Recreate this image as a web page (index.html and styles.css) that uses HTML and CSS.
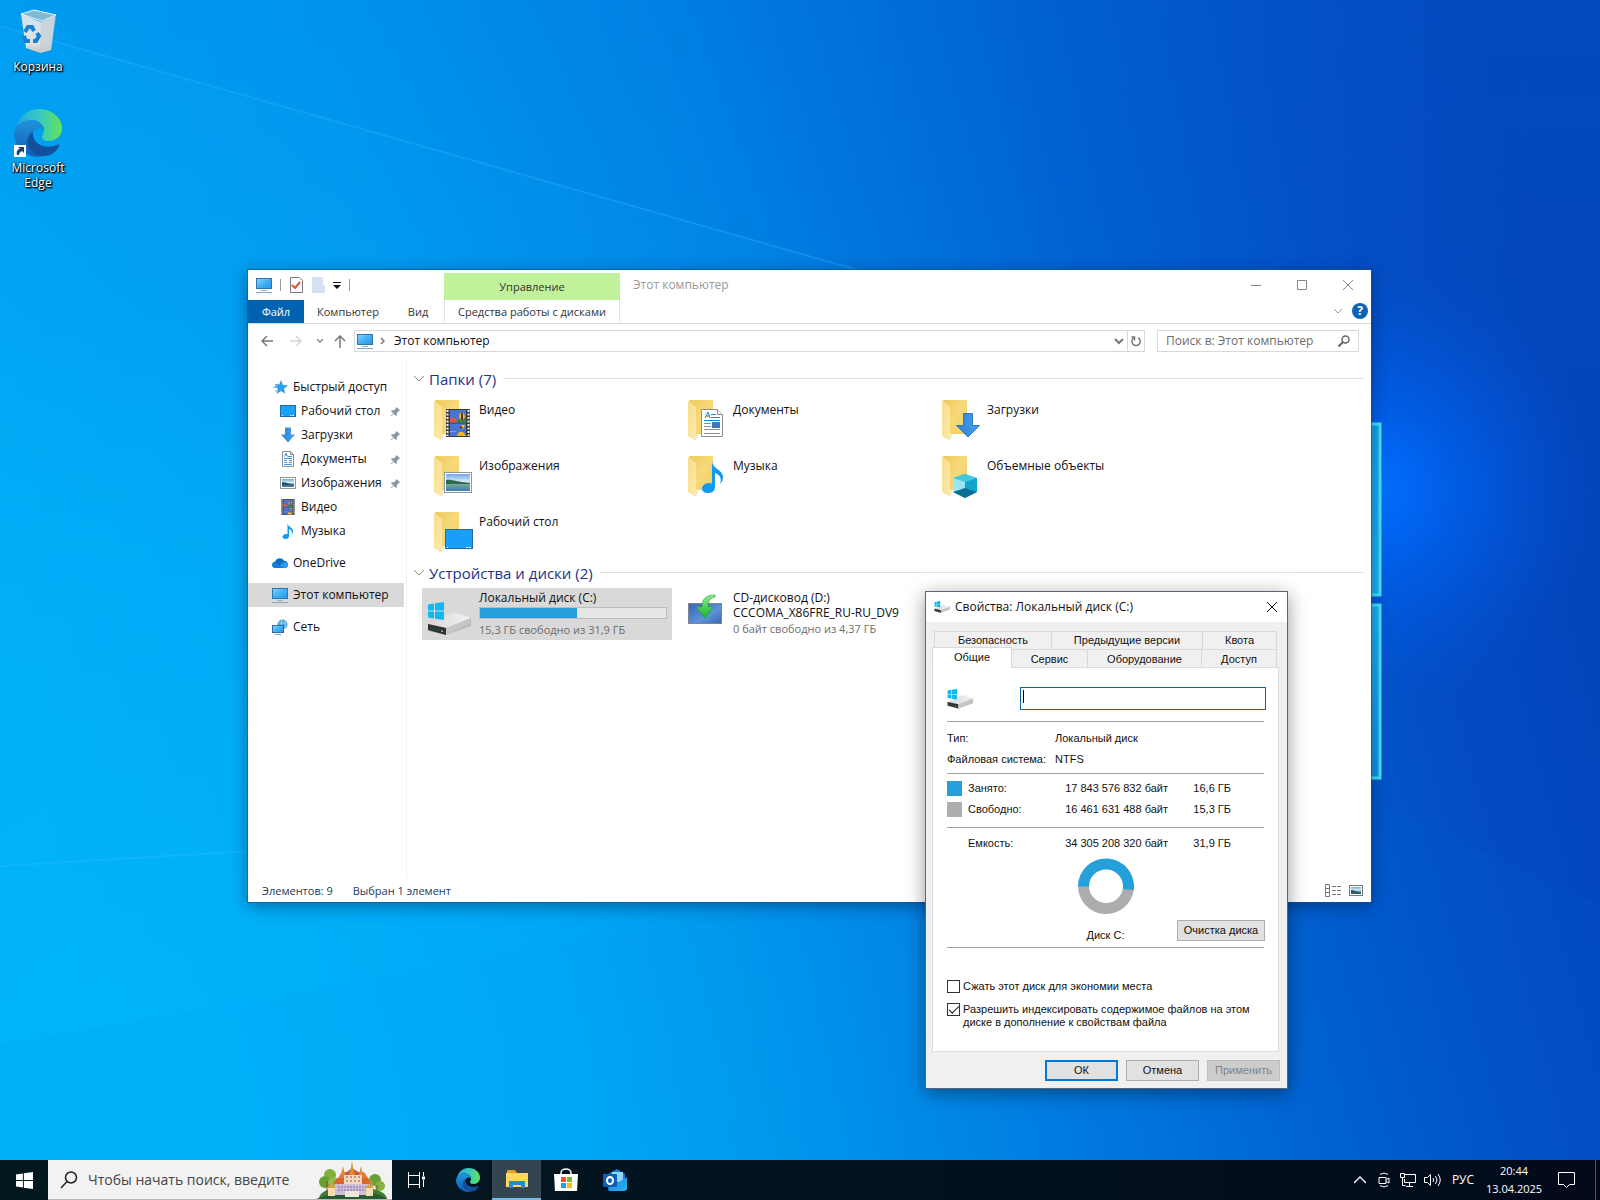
FILE: index.html
```html
<!DOCTYPE html>
<html lang="ru">
<head>
<meta charset="utf-8">
<title>Рабочий стол</title>
<link rel="stylesheet" href="styles.css">
</head>
<body>
<svg class="sprite" aria-hidden="true">
  <defs>
    <linearGradient id="gScreen" x1="0" y1="0" x2="1" y2="1"><stop offset="0" stop-color="#8fd3fb"/><stop offset=".5" stop-color="#41b1f5"/><stop offset="1" stop-color="#2b95e4"/></linearGradient>
    <linearGradient id="gFolder" x1="0" y1="0" x2="1" y2="1"><stop offset="0" stop-color="#eecb62"/><stop offset=".5" stop-color="#f8d978"/><stop offset="1" stop-color="#f1cc66"/></linearGradient>
    <linearGradient id="gFlap" x1="0" y1="0" x2="1" y2="1"><stop offset="0" stop-color="#f7dd8a"/><stop offset="1" stop-color="#fde9ac"/></linearGradient>
    <linearGradient id="gArrow" x1="0" y1="0" x2="1" y2="0"><stop offset="0" stop-color="#2a7fd4"/><stop offset="1" stop-color="#4aa3ee"/></linearGradient>
    <linearGradient id="gSky" x1="0" y1="0" x2="0" y2="1"><stop offset="0" stop-color="#6ea6e8"/><stop offset=".45" stop-color="#dcecf7"/><stop offset=".6" stop-color="#7aa79a"/><stop offset="1" stop-color="#3b7db0"/></linearGradient>
    <linearGradient id="gDrive" x1="0" y1="0" x2="1" y2="0"><stop offset="0" stop-color="#d8d8da"/><stop offset="1" stop-color="#f2f2f4"/></linearGradient>
    <linearGradient id="gCd" x1="0" y1="0" x2="1" y2="1"><stop offset="0" stop-color="#3563b4"/><stop offset=".6" stop-color="#5d93d6"/><stop offset="1" stop-color="#3866b0"/></linearGradient>
    <linearGradient id="gGreen" x1="0" y1="0" x2="0" y2="1"><stop offset="0" stop-color="#8af08a"/><stop offset="1" stop-color="#16b52c"/></linearGradient>
    <linearGradient id="gEdgeA" x1="0" y1="0" x2="1" y2="0"><stop offset="0" stop-color="#24a6e4"/><stop offset=".5" stop-color="#37c8c4"/><stop offset="1" stop-color="#62e455"/></linearGradient>
    <linearGradient id="gEdgeB" x1="0" y1="0" x2="0" y2="1"><stop offset="0" stop-color="#2193dc"/><stop offset="1" stop-color="#0f5cb5"/></linearGradient>
    <linearGradient id="gBin" x1="0" y1="0" x2="0" y2="1"><stop offset="0" stop-color="#cfe3ef"/><stop offset=".75" stop-color="#dfe3e7"/><stop offset="1" stop-color="#cdbfb8"/></linearGradient>
    <linearGradient id="gOut" x1="0" y1="0" x2="1" y2="1"><stop offset="0" stop-color="#1b86dd"/><stop offset="1" stop-color="#28b4f0"/></linearGradient>
    <linearGradient id="gWall" x1="0" y1=".6" x2="1" y2=".4"><stop offset="0" stop-color="#00aef8"/><stop offset=".3" stop-color="#009ff2"/><stop offset=".5" stop-color="#0087e6"/><stop offset=".72" stop-color="#0062d2"/><stop offset=".87" stop-color="#034cc4"/><stop offset="1" stop-color="#0442b8"/></linearGradient>
    <linearGradient id="gTopDark" x1="0" y1="0" x2="0" y2="1"><stop offset="0" stop-color="#006ad8" stop-opacity=".2"/><stop offset="1" stop-color="#006ad8" stop-opacity="0"/></linearGradient>
    <radialGradient id="gGlow" cx="1375" cy="490" r="220" gradientUnits="userSpaceOnUse"><stop offset="0" stop-color="#0070ff"/><stop offset=".3" stop-color="#0068fa" stop-opacity=".7"/><stop offset="1" stop-color="#0058e0" stop-opacity="0"/></radialGradient>
    <radialGradient id="gLow" cx="150" cy="1100" r="800" gradientUnits="userSpaceOnUse"><stop offset="0" stop-color="#00b8fc" stop-opacity=".7"/><stop offset="1" stop-color="#00b8fc" stop-opacity="0"/></radialGradient>
    <linearGradient id="gPane" x1="0" y1="0" x2="0" y2="1"><stop offset="0" stop-color="#16a4ea"/><stop offset=".5" stop-color="#1fb2f2"/><stop offset="1" stop-color="#1590e4"/></linearGradient>
  </defs>

  <symbol id="pc" viewBox="0 0 16 16"><rect x=".5" y="1.5" width="15" height="10" fill="url(#gScreen)" stroke="#2a78ac"/><path d="M5 13.5h6" stroke="#8fb3ca"/><path d="M0 15.5h16" stroke="#86a6c4"/></symbol>
  <symbol id="star" viewBox="0 0 16 16"><path d="M9 1l2 5 5 .3-4 3.4 1.300 5L9 12l-4.500 3 1.300-5L2.500 6.500 7 6z" fill="#2f9fe8"/><path d="M3 5.500h4M1 8.500h5M3 12h3" stroke="#5cb6ee"/></symbol>
  <symbol id="desk" viewBox="0 0 16 16"><rect x=".5" y="2.500" width="15" height="11" fill="#18a2f8" stroke="#1b6fae"/><path d="M2 12.500h1M10 12.500h1M12 12.500h2" stroke="#e6f6ff"/></symbol>
  <symbol id="down" viewBox="0 0 16 16"><path d="M5 .5h6v7h4L8 15.500 1 7.500h4z" fill="url(#gArrow)"/></symbol>
  <symbol id="docs" viewBox="0 0 16 16"><path d="M2.500.5h8l3 3v12h-11z" fill="#fff" stroke="#8b8f93"/><path d="M10.500.5v3h3" fill="none" stroke="#8b8f93"/><path d="M4.500 5.500l1.500-3 1.500 3" fill="none" stroke="#1e82cc"/><path d="M8 5.500h4M4 7.500h8M4 9.500h3M9 9.500h3M4 11.500h3M9 11.500h3M4 13.500h8" stroke="#3f97d6"/></symbol>
  <symbol id="pics" viewBox="0 0 16 16"><rect x=".5" y="2.500" width="15" height="11" fill="#fff" stroke="#8f979e"/><rect x="2" y="4" width="12" height="8" fill="url(#gSky)"/><path d="M2 7.500c3-1 5 1.500 12 2v1H2z" fill="#27515c"/></symbol>
  <symbol id="video" viewBox="0 0 24 28"><rect width="24" height="28" fill="#3c3c3f"/><path d="M1.500 1v26M22.500 1v26" stroke="#f4f4f4" stroke-width="2" stroke-dasharray="2 1.500"/><rect x="4" y="1" width="16" height="12.500" fill="#4a73d6"/><rect x="4" y="14.500" width="16" height="12.500" fill="#4a73d6"/><path d="M4 9c3-2 5 0 7 2v2.500H4z" fill="#d45b52"/><path d="M11 13.500h9V9c-3 0-5 2-9 2z" fill="#2d8a41"/><path d="M14 4h4l1 4-2 3h-2l-2-3z" fill="#f1c21b"/><path d="M16 4v7M14 18h4" stroke="#6b2a10" stroke-width="2"/><path d="M15 16h4l-2 4z" fill="#f1c21b"/><path d="M11 27l2-4h4l3 4z" fill="#f1b51b"/><path d="M4 22h6v1H4z" fill="#7fa0ea"/></symbol>
  <symbol id="music" viewBox="0 0 22 32"><path d="M10 0c0 8 12 9 11 17-.3 3-1.500 4.500-3 6 2-6 0-9-5-11v14c0 4-3 6-7 6s-6-2-6-4.500S3 22 7 22c1.500 0 2.500.3 3 .7z" fill="#109af2"/></symbol>
  <symbol id="cloud" viewBox="0 0 16 12"><path d="M3.500 11A3.300 3.300 0 013 4.500 5 5 0 0112 3.700 3.700 3.700 0 0113 11z" fill="#0f6cc4"/><path d="M4 11l7-5.500c3-1.500 5 .5 5 2.500 0 1.800-1.300 3-3 3z" fill="#2a9be8"/><path d="M0 8a3 3 0 013.500-3L12 10.900H3.500C1.500 11 0 9.800 0 8z" fill="#1480d6"/></symbol>
  <symbol id="net" viewBox="0 0 16 16"><circle cx="10.500" cy="5.500" r="5" fill="#4ba3d4"/><path d="M7 3.500c2 1 5 1 7-.5M10 1c-1 3-1 6 0 9M13 2c1 2 1 5 0 7" fill="none" stroke="#a8d8f0"/><rect x=".5" y="6.500" width="11" height="7" fill="url(#gScreen)" stroke="#2a6f9e"/><path d="M3 15.500h6" stroke="#7fa5bf"/></symbol>
  <symbol id="pin" viewBox="0 0 12 12"><path d="M7 1l4 4-1.500.5-2 2 0 2.500L6.500 11 4 8.500 1 11.500.5 11l3-3L1 5.500 2 4.500h2.500l2-2z" fill="#8d969f"/></symbol>
  <symbol id="folder" viewBox="0 0 40 44"><path d="M1 0h24v34H6z" fill="url(#gFolder)"/><path d="M0 1l8 6v34l-8-5z" fill="url(#gFlap)"/><path d="M8 34l2 2-2 5z" fill="#efe6cc"/></symbol>
  <symbol id="winlogo" viewBox="0 0 16 16"><path d="M0 2.300l6.500-.9v6.200H0zM7.400 1.200L16 0v7.600H7.400zM0 8.400h6.500v6.200L0 13.700zM7.400 8.400H16V16l-8.600-1.200z"/></symbol>
  <symbol id="drive" viewBox="0 0 44 34"><path d="M1 23l23-11 20 4v8L19 33 1 29z" fill="#b9b9bc"/><path d="M1 22l23-11q2-.6 4 0l14 4q3 1 0 2.500L20 26z" fill="url(#gDrive)"/><path d="M1 22l18 4v7L1 28z" fill="#303234"/><path d="M19 26l24-10v6L19 33z" fill="#c6c6c9"/><path d="M3 25l9 2v2l-9-2z" fill="#1d4a3c"/><path d="M14 29l2 .4" stroke="#d8e6d8"/><g fill="#10b8f0"><path d="M1 2.500l6-1v7H1zM8 1.300L17 0v8.500H8zM1 9.500h6v7l-6-1zM8 9.500h9V18l-9-1.300z"/></g></symbol>
  <symbol id="cd" viewBox="0 0 34 32"><rect x=".5" y="9.500" width="33" height="20" fill="url(#gCd)" stroke="#7d8590"/><path d="M27 1c-8 0-13 3-13 12H8l9 11 8-11h-5c0-6 2-9 7-10z" fill="url(#gGreen)" stroke="#1f9a3a" stroke-width=".6"/></symbol>
  <symbol id="edge" viewBox="0 0 48 48"><path d="M2 22C3 9 13 0 25 0c14 0 23 10 23 19 0 8-6 13-13 13-5 0-7-2-7-4s2-3 2-7c0-5-5-10-13-10C9 11 4 15 2 22z" fill="url(#gEdgeA)"/><path d="M0 24C1 16 8 11 17 11c7 0 12 4 13 9-3-2-7-1-9 1-8 7-2 22 10 26C14 51 0 39 0 24z" fill="url(#gEdgeB)"/><path d="M18 23c-10 9-4 23 13 24 6 0 11-4 14-10 1-2-1-2-2-1-9 4-22 1-24-9 0-2 0-3-1-4z" fill="#12509e"/></symbol>
</svg>

<main class="desktop">
  <svg class="wallpaper" viewBox="0 0 1600 1200" preserveAspectRatio="none" aria-hidden="true">
    <rect width="1600" height="1200" fill="url(#gWall)"/>
    <rect width="1600" height="620" fill="url(#gTopDark)"/>
    <rect width="1600" height="1200" fill="url(#gLow)"/>
    <path d="M0 26L1371 416V800L0 866z" fill="#14b2ff" opacity=".07"/>
    <path d="M0 1045L1371 800 1600 905V1200H0z" fill="#0090ee" opacity=".05"/>
    <path d="M0 26L900 282" stroke="#38b8ff" stroke-width="2" opacity=".3"/>
    <path d="M0 866L300 848" stroke="#4cc8ff" stroke-width="2" opacity=".2"/>
    <rect width="1600" height="1200" fill="url(#gGlow)"/>
    <path d="M1300 424l80 0v171h-80zM1300 605h80v173h-80z" fill="url(#gPane)" stroke="#3fe4fa" stroke-width="3"/>
  </svg>

  <nav class="shortcuts">
    <a href="#" class="shortcut">
      <svg width="48" height="48" viewBox="0 0 48 48"><path d="M7 6l5 34 14 5 11-3 4-34-14 6z" fill="url(#gBin)"/><path d="M7 6l13-4 22 5-14 6z" fill="#7fb9d4" stroke="#eef6fa"/><path d="M27 13l-1 32 11-3 5-34z" fill="#c3cdd4" opacity=".7"/><g fill="none" stroke="#1c80d0" stroke-width="4"><path d="M11 24l3-5 4 0 2 4M10 28l2 5 4 0M19 33h3l3-5-2-3"/></g></svg>
      <span>Корзина</span>
    </a>
    <a href="#" class="shortcut">
      <svg width="48" height="48" viewBox="0 0 48 48"><use href="#edge"/><rect x="0" y="36" width="12" height="12" fill="#fff"/><path d="M3 46c-1-4 1-6 3-6L4 38h6v6L8 42c-2 1-3 2-3 4z" fill="#1c3f7c"/></svg>
      <span>Microsoft Edge</span>
    </a>
  </nav>

  <section class="explorer" aria-label="Этот компьютер">
    <header class="ribbon">
      <div class="quick">
        <svg width="16" height="16"><use href="#pc"/></svg>
        <i class="bar"></i>
        <svg width="14" height="18" viewBox="0 0 14 18"><path d="M1.500 1.500h9l3 3v12h-12z" fill="#fff" stroke="#7a7a7a"/><path d="M3 9l3 3 5-6" fill="none" stroke="#e0532f" stroke-width="2"/></svg>
        <svg width="14" height="18" viewBox="0 0 14 18"><path d="M1 1h11v8h2v8H1z" fill="#d5e1f1"/></svg>
        <svg width="8" height="8" viewBox="0 0 8 8"><path d="M0 1.500h8" stroke="#111"/><path d="M0 4h8L4 8z" fill="#111"/></svg>
        <i class="bar"></i>
      </div>
      <div class="tabs">
        <button class="file">Файл</button>
        <button class="tab-pc">Компьютер</button>
        <button class="tab-view">Вид</button>
      </div>
      <div class="manage">
        <div class="manage-title">Управление</div>
        <button>Средства работы с дисками</button>
      </div>
      <h1>Этот компьютер</h1>
      <div class="caption">
        <div class="caption-row">
          <button aria-label="Свернуть"><svg width="10" height="10"><path d="M0 5.500h10" stroke="#888"/></svg></button>
          <button aria-label="Развернуть"><svg width="10" height="10"><path d="M.5.5h9v9h-9z" fill="none" stroke="#888"/></svg></button>
          <button aria-label="Закрыть"><svg width="10" height="10"><path d="M0 0l10 10M10 0L0 10" stroke="#888"/></svg></button>
        </div>
        <div class="help-row">
          <svg width="8" height="6"><path d="M0 1l4 4 4-4" fill="none" stroke="#9a9a9a"/></svg>
          <button class="help" aria-label="Справка">?</button>
        </div>
      </div>
    </header>

    <div class="address-row">
      <div class="nav-buttons">
        <button aria-label="Назад"><svg width="12" height="12"><path d="M12 6H1M6 1L1 6l5 5" fill="none" stroke="#777" stroke-width="1.500"/></svg></button>
        <button aria-label="Вперед"><svg width="12" height="12"><path d="M0 6h11M6 1l5 5-5 5" fill="none" stroke="#d6d6d6" stroke-width="1.500"/></svg></button>
        <button class="recent" aria-label="Последние"><svg width="6" height="6"><path d="M0 1l3 3 3-3" fill="none" stroke="#888" stroke-width="1.500"/></svg></button>
        <button aria-label="Вверх"><svg width="12" height="13"><path d="M6 13V1M1 6l5-5 5 5" fill="none" stroke="#777" stroke-width="1.500"/></svg></button>
      </div>
      <div class="address">
        <svg width="16" height="16"><use href="#pc"/></svg>
        <svg width="5" height="8"><path d="M1 1l3 3-3 3" fill="none" stroke="#777" stroke-width="1.500"/></svg>
        <span>Этот компьютер</span>
        <button aria-label="Предыдущие расположения"><svg width="10" height="7"><path d="M1 1l4 4 4-4" fill="none" stroke="#777" stroke-width="2"/></svg></button>
        <button class="refresh" aria-label="Обновить"><svg width="12" height="12"><path d="M8 2.600A4.200 4.200 0 113.500 3M1.500 2H4.500V5.500" fill="none" stroke="#777" stroke-width="1.500"/></svg></button>
      </div>
      <label class="search">
        <input type="text" placeholder="Поиск в: Этот компьютер" aria-label="Поиск">
        <svg width="12" height="12"><circle cx="7.500" cy="4.500" r="3.500" fill="none" stroke="#666" stroke-width="1.500"/><path d="M5 7l-4.500 4.500" stroke="#666" stroke-width="2"/></svg>
      </label>
    </div>

    <div class="body">
      <nav class="tree">
        <a href="#"><svg width="16" height="16"><use href="#star"/></svg>Быстрый доступ</a>
        <a href="#" class="sub"><svg width="16" height="16"><use href="#desk"/></svg>Рабочий стол<svg class="pin" width="11" height="11"><use href="#pin"/></svg></a>
        <a href="#" class="sub"><svg width="16" height="16"><use href="#down"/></svg>Загрузки<svg class="pin" width="11" height="11"><use href="#pin"/></svg></a>
        <a href="#" class="sub"><svg width="16" height="16"><use href="#docs"/></svg>Документы<svg class="pin" width="11" height="11"><use href="#pin"/></svg></a>
        <a href="#" class="sub"><svg width="16" height="16"><use href="#pics"/></svg>Изображения<svg class="pin" width="11" height="11"><use href="#pin"/></svg></a>
        <a href="#" class="sub"><svg width="16" height="16"><use href="#video"/></svg>Видео</a>
        <a href="#" class="sub"><svg width="16" height="16"><use href="#music"/></svg>Музыка</a>
        <a href="#" class="root"><svg width="16" height="12"><use href="#cloud"/></svg>OneDrive</a>
        <a href="#" class="root selected"><svg width="16" height="16"><use href="#pc"/></svg>Этот компьютер</a>
        <a href="#" class="root"><svg width="16" height="16"><use href="#net"/></svg>Сеть</a>
      </nav>
      <div class="content">
        <h2><svg width="12" height="8"><path d="M1 1l5 5 5-5" fill="none" stroke="#8a8a8a"/></svg>Папки (7)</h2>
        <div class="grid">
          <a href="#" class="tile"><svg width="40" height="44"><use href="#folder"/><use href="#video" x="12" y="9" width="24" height="28"/></svg><span>Видео</span></a>
          <a href="#" class="tile"><svg width="40" height="44" viewBox="0 0 40 44"><use href="#folder"/><path d="M13.500 9.500h16l5 5v22h-21z" fill="#fff" stroke="#8a8f94"/><path d="M29.500 9.500v5h5" fill="#f2f2f2" stroke="#8a8f94"/><path d="M17 18l3-6 2 6M18 16h4" fill="none" stroke="#1e82cc"/><path d="M23 14.500h5M23 17.500h9M16 20.500h16" stroke="#1e82cc"/><path d="M16 23.500h7M16 26.500h7M16 29.500h16M16 33.500h16" stroke="#8a8f94"/><rect x="24" y="22" width="8" height="6" fill="#3f78b5"/></svg><span>Документы</span></a>
          <a href="#" class="tile"><svg width="40" height="44" viewBox="0 0 40 44"><use href="#folder"/><path d="M21.500 13.500h9v12h7L26 37 14.500 25.500h7z" fill="url(#gArrow)" stroke="#2c78c4"/></svg><span>Загрузки</span></a>
          <a href="#" class="tile"><svg width="40" height="44" viewBox="0 0 40 44"><use href="#folder"/><rect x="10.500" y="16.500" width="27" height="20" fill="#fff" stroke="#8f979e"/><rect x="12" y="18" width="24" height="17" fill="url(#gSky)"/><path d="M12 24c6-1 10 2 24 3v1H12z" fill="#2e6b4e"/></svg><span>Изображения</span></a>
          <a href="#" class="tile"><svg width="40" height="44"><use href="#folder"/><use href="#music" x="14" y="5" width="22" height="32"/></svg><span>Музыка</span></a>
          <a href="#" class="tile"><svg width="40" height="44" viewBox="0 0 40 44"><use href="#folder"/><path d="M11 22l12-4 12 4v14l-12 6-12-6z" fill="#2fc0dc"/><path d="M11 22l12-4 12 4-12 4z" fill="#48c6de"/><path d="M11 22l12 4v9l-12 1z" fill="#98e8f4"/><path d="M23 26l12-4v14l-12-1z" fill="#12a4cc"/><path d="M11 36l12-4 12 4-12 6z" fill="#0a6f92"/></svg><span>Объемные объекты</span></a>
          <a href="#" class="tile"><svg width="40" height="44" viewBox="0 0 40 44"><use href="#folder"/><rect x="11.500" y="17.500" width="27" height="19" fill="#18a0f8" stroke="#2a6a9a"/><path d="M13 35.500h1M32 35.500h2M35 35.500h2" stroke="#fff"/></svg><span>Рабочий стол</span></a>
        </div>
        <h2><svg width="12" height="8"><path d="M1 1l5 5 5-5" fill="none" stroke="#8a8a8a"/></svg>Устройства и диски (2)</h2>
        <div class="grid">
          <a href="#" class="tile drive selected"><svg width="44" height="34"><use href="#drive"/></svg><span class="info"><b>Локальный диск (C:)</b><i class="meter"><i style="width:52%"></i></i><small>15,3 ГБ свободно из 31,9 ГБ</small></span></a>
          <a href="#" class="tile drive"><svg class="cd" width="34" height="32"><use href="#cd"/></svg><span class="info"><b>CD-дисковод (D:)</b><b>CCCOMA_X86FRE_RU-RU_DV9</b><small>0 байт свободно из 4,37 ГБ</small></span></a>
        </div>
      </div>
    </div>

    <footer class="status">
      <span>Элементов: 9</span><span>Выбран 1 элемент</span>
      <svg class="views" width="16" height="13"><path d="M.5.5h4v12h-4zM.5 4.500h4M.5 8.500h4" fill="none" stroke="#777"/><path d="M7 2.500h4M12 2.500h4M7 6.500h4M12 6.500h4M7 10.500h4M12 10.500h4" stroke="#777"/></svg>
      <svg width="14" height="11"><rect x=".5" y=".5" width="13" height="10" fill="#fff" stroke="#777"/><rect x="2" y="2" width="10" height="7" fill="url(#gSky)"/><path d="M2 5c3 0 5 2 10 2v2H2z" fill="#2b5a72"/></svg>
    </footer>
  </section>

  <section class="dialog" role="dialog" aria-label="Свойства: Локальный диск (C:)">
    <header class="dialog-title">
      <svg width="16" height="12"><use href="#drive"/></svg>
      <h1>Свойства: Локальный диск (C:)</h1>
      <button aria-label="Закрыть"><svg width="12" height="12"><path d="M1 1l10 10M11 1L1 11" stroke="#111"/></svg></button>
    </header>
    <div class="tabrow top" role="tablist"><button>Безопасность</button><button>Предыдущие версии</button><button>Квота</button></div>
    <div class="tabrow" role="tablist"><button class="active">Общие</button><button>Сервис</button><button>Оборудование</button><button>Доступ</button></div>
    <div class="panel">
      <div class="name-row">
        <svg width="26" height="22"><use href="#drive"/></svg>
        <div class="field"><input type="text" aria-label="Метка тома"><i class="caret"></i></div>
      </div>
      <dl>
        <dt>Тип:</dt><dd>Локальный диск</dd>
        <dt>Файловая система:</dt><dd>NTFS</dd>
      </dl>
      <table>
        <tbody>
          <tr><td class="key"><i class="swatch used"></i></td><th scope="row">Занято:</th><td>17 843 576 832 байт</td><td>16,6 ГБ</td></tr>
          <tr><td class="key"><i class="swatch free"></i></td><th scope="row">Свободно:</th><td>16 461 631 488 байт</td><td>15,3 ГБ</td></tr>
        </tbody>
      </table>
      <table class="total">
        <tbody>
          <tr><td class="key"></td><th scope="row">Емкость:</th><td>34 305 208 320 байт</td><td>31,9 ГБ</td></tr>
        </tbody>
      </table>
      <div class="chart-row">
        <figure>
          <svg width="56" height="56" viewBox="0 0 56 56" fill="none" stroke-width="11"><path d="M5.500 28a22.500 22.500 0 0044.800 3" stroke="#adadad"/><path d="M5.500 28.500a22.500 22.500 0 1144.800 3" stroke="#26a0da"/></svg>
          <figcaption>Диск C:</figcaption>
        </figure>
        <button class="btn">Очистка диска</button>
      </div>
      <label class="check"><input type="checkbox">Сжать этот диск для экономии места</label>
      <label class="check"><input type="checkbox" checked>Разрешить индексировать содержимое файлов на этом<br>диске в дополнение к свойствам файла</label>
    </div>
    <footer class="actions">
      <button class="btn default">ОК</button>
      <button class="btn">Отмена</button>
      <button class="btn" disabled>Применить</button>
    </footer>
  </section>
</main>

<footer class="taskbar">
  <button class="start" aria-label="Пуск"><svg width="17" height="17" fill="#fff"><use href="#winlogo"/></svg></button>
  <label class="task-search">
    <svg width="18" height="18"><circle cx="11" cy="6.500" r="5.500" fill="none" stroke="#222" stroke-width="1.500"/><path d="M7 10.500L1 17" stroke="#222" stroke-width="1.500"/></svg>
    <input type="text" placeholder="Чтобы начать поиск, введите" aria-label="Поиск в Windows">
    <svg class="castle" width="72" height="38" viewBox="0 0 72 38">
      <path d="M3 38c0-8 12-12 33-12s34 4 35 12z" fill="#3f7d38"/><path d="M0 38q20-8 40-6 20-2 31 6z" fill="#275b33"/>
      <circle cx="14" cy="14" r="6" fill="#7fae3a"/><circle cx="9" cy="21" r="6" fill="#6a9e37"/><circle cx="17" cy="21" r="5" fill="#92bb48"/><circle cx="59" cy="19" r="6" fill="#6a9e37"/><circle cx="64" cy="25" r="5" fill="#86b33f"/><circle cx="53" cy="23" r="4" fill="#8db544"/>
      <path d="M11 20v14M61 24v10" stroke="#7b5026"/>
      <rect x="19" y="22" width="34" height="12" fill="#cdbfd8"/><path d="M17 23l4-6h31l4 6z" fill="#d8652e"/><path d="M22 17l4-6h22l4 6z" fill="#e27b35"/>
      <rect x="28" y="13" width="18" height="10" fill="#f0d9c0"/><path d="M27 14l9-7 11 7z" fill="#cf5a32"/><path d="M36 0l1 7 2 7h-6l2-7z" fill="#d78c35"/><path d="M27 5l2 9h-4zM45 5l2 9h-4z" fill="#e08a3c"/>
      <path d="M22 26h29M22 29h29" stroke="#8668a6" stroke-dasharray="2 1"/><path d="M30 16h15M30 20h15" stroke="#a54b3a" stroke-dasharray="2 2"/>
      <rect x="12" y="26" width="7" height="9" fill="#f1dfb0"/><path d="M11 27l4-5 5 5z" fill="#e59a4a"/><rect x="50" y="26" width="7" height="9" fill="#f1dfb0"/><path d="M49 27l5-5 4 5z" fill="#e59a4a"/><rect x="29" y="30" width="14" height="6" fill="#efe6dc"/>
    </svg>
  </label>
  <button class="task-view" aria-label="Представление задач"><svg width="18" height="18" fill="none" stroke="#fff"><path d="M1.500 1v3M12.500 1v3M1 4.500h12M1.500 5v8M12.500 5v8M1 13.500h12M1.500 13v4M12.500 13v4M16.500 1v4M16.500 9v7"/><path d="M15 7h3" stroke-width="3"/></svg></button>
  <button aria-label="Microsoft Edge"><svg width="24" height="24"><use href="#edge"/></svg></button>
  <button class="running" aria-label="Проводник"><svg width="22" height="20" viewBox="0 0 22 20"><path d="M1 1h8l2 3h10v14H1z" fill="#e8a020"/><path d="M0 4h22v14H0z" fill="#fdd667"/><path d="M3 19v-7h16v7h-4v-3H7v3z" fill="#2b88c8"/></svg></button>
  <button aria-label="Microsoft Store"><svg width="24" height="24"><path d="M7 8V5a5 4 0 0110 0v3" fill="none" stroke="#fff" stroke-width="1.500"/><path d="M0 6h24l-1 17H1z" fill="#fff"/><path d="M7 9h5v5H7z" fill="#f0502a"/><path d="M13 9h5v5h-5z" fill="#80b928"/><path d="M7 15h5v5H7z" fill="#1aa3e8"/><path d="M13 15h5v5h-5z" fill="#fbb913"/></svg></button>
  <button aria-label="Outlook"><svg width="24" height="24" viewBox="0 0 24 24"><path d="M5 6l9-5 8 5v15q0 2-2 2H7q-2 0-2-2z" fill="#1a7bd0"/><path d="M9 4h11v10H9z" fill="#8fd6fa"/><path d="M5 21L24 9v11q0 3-3 3H7z" fill="url(#gOut)"/><rect y="6" width="14" height="13" rx="1" fill="#0c5fb8"/><ellipse cx="7" cy="12.500" rx="3" ry="3.500" fill="none" stroke="#fff" stroke-width="2"/></svg></button>
  <div class="tray">
    <button aria-label="Скрытые значки"><svg width="12" height="8"><path d="M0 7l6-6 6 6" fill="none" stroke="#fff" stroke-width="1.300"/></svg></button>
    <button aria-label="Камера"><svg width="12" height="16" fill="none" stroke="#fff"><path d="M1 5.500h7v6H1zM8 7.500l3-1.500v5L8 9.500M2 2.500q4-3 8 0M2 13.500q4 3 8 0"/></svg></button>
    <button aria-label="Сеть"><svg width="16" height="14" fill="none" stroke="#fff"><path d="M5 1.500h10.500v8H4.500V6M.5.500h4v4h-4zM2.500 5v7.500h3M9.500 10v3M6 13.500h7"/></svg></button>
    <button aria-label="Громкость"><svg width="17" height="14" fill="none" stroke="#fff"><path d="M.5 4.500h3l3-3v11l-3-3h-3zM9 5q1.500 2 0 4M11.500 3q3 4 0 8M14 1q4.500 6 0 12"/></svg></button>
    <button class="lang">РУС</button>
    <button class="clock"><span>20:44</span><span>13.04.2025</span></button>
    <button class="notify" aria-label="Уведомления"><svg width="17" height="16"><path d="M.5.5h16v12h-5l-3 3-3-3h-5z" fill="none" stroke="#fff"/></svg></button>
  </div>
</footer>
</body>
</html>
```

FILE: styles.css
```css
* { box-sizing: border-box; }

body {
  margin: 0;
  min-height: 100vh;
  display: flex;
  flex-direction: column;
  font: 12px/16px "Open Sans", "Noto Sans", sans-serif;
  color: #111;
  overflow: hidden;
}

button, input {
  font: inherit;
  color: inherit;
  border: 0;
  background: none;
  padding: 0;
  margin: 0;
}

button { display: flex; align-items: center; justify-content: center; white-space: nowrap; }
a { color: inherit; text-decoration: none; }
svg { flex: none; display: block; }
h1, h2, dl, dd, figure { margin: 0; font-weight: 400; }
i, b, small { font-style: normal; font-weight: 400; font-size: inherit; }

.sprite { position: absolute; width: 0; height: 0; }

/* Desktop */
.desktop { position: relative; flex: 1; background: #0084e4; }
.wallpaper { position: absolute; left: 0; top: 0; width: 100%; height: 100vh; }

.shortcuts {
  position: relative;
  width: 76px;
  padding-top: 8px;
  display: flex;
  flex-direction: column;
  gap: 28px;
}
.shortcut {
  display: flex;
  flex-direction: column;
  align-items: center;
  gap: 3px;
  text-align: center;
  color: #fff;
  line-height: 15px;
  min-height: 73px;
  text-shadow: 1px 1px 2px #000, 0 0 2px #000, 1px 1px 1px #000;
}

/* Explorer window */
.explorer {
  position: absolute;
  left: 248px;
  right: 229px;
  top: 270px;
  bottom: 258px;
  display: flex;
  flex-direction: column;
  background: #fff;
  box-shadow: 0 0 0 1px rgba(20, 80, 140, .5), 0 4px 16px rgba(0, 20, 60, .45);
}

.ribbon {
  display: grid;
  grid-template-columns: 196px 176px 1fr auto;
  grid-template-rows: 30px 23px;
  height: 54px;
  border-bottom: 1px solid #dadbdc;
  color: #333;
  font-size: 11px;
}
.quick { display: flex; align-items: center; gap: 8px; padding-left: 8px; }
.quick .bar { width: 1px; height: 12px; background: #999; }
.tabs { grid-row: 2; grid-column: 1; display: flex; }
.tabs .file { width: 56px; background: #0063b1; color: #fff; }
.tab-pc { width: 88px; }
.tab-view { width: 52px; }
.manage { grid-column: 2; grid-row: 1 / 3; display: flex; flex-direction: column; padding-top: 3px; }
.manage-title { height: 27px; line-height: 28px; text-align: center; background: #c1f19b; }
.manage button { flex: 1; border: solid #e3e3e3; border-width: 0 1px; }
.ribbon h1 { grid-column: 3; grid-row: 1; padding-left: 13px; font-size: 12px; line-height: 30px; color: #999; }
.caption { grid-column: 4; grid-row: 1 / 3; }
.caption-row { display: flex; height: 29px; }
.caption-row button { width: 46px; }
.help-row { display: flex; height: 24px; align-items: center; justify-content: flex-end; gap: 10px; padding-right: 3px; }
.help {
  width: 16px;
  height: 16px;
  border-radius: 50%;
  background: #0d63b5;
  color: #fff;
  font-size: 12px;
  font-weight: 700;
}

.address-row { display: flex; align-items: center; gap: 12px; height: 34px; padding-right: 12px; }
.nav-buttons { display: flex; align-items: center; gap: 17px; padding-left: 13px; width: 94px; }
.nav-buttons .recent { margin: 0 -6px 0 -2px; }
.address {
  flex: 1;
  display: flex;
  align-items: center;
  height: 22px;
  border: 1px solid #d9d9d9;
  padding-left: 2px;
}
.address span { flex: 1; }
.address svg + svg { margin: 0 9px 0 7px; }
.address button { width: 17px; height: 20px; }
.address .refresh { border-left: 1px solid #d9d9d9; }
.search {
  display: flex;
  align-items: center;
  width: 202px;
  height: 22px;
  padding: 0 8px;
  border: 1px solid #d9d9d9;
}
.search input { flex: 1; min-width: 0; outline: 0; }
.search input::placeholder { color: #6d6d6d; opacity: 1; }

.body { flex: 1; min-height: 0; display: grid; grid-template-columns: 159px 1fr; }
.tree { border-right: 1px solid #f0f0f0; padding: 17px 2px 0 0; }
.tree a { display: flex; align-items: center; gap: 5px; height: 24px; padding-left: 24px; }
.tree .sub { padding-left: 32px; padding-right: 3px; }
.tree .pin { margin-left: auto; }
.tree .root { margin-top: 8px; }
.tree .selected, .tile.selected { background: #d9d9d9; }

.content { padding: 6px 7px 0 6px; }
.content h2 {
  display: flex;
  align-items: center;
  gap: 4px;
  height: 29px;
  font-size: 15px;
  color: #1e3287;
}
.content h2::after { content: ""; flex: 1; height: 1px; margin-left: 3px; background: #e2e2e2; }
.grid { display: grid; grid-template-columns: repeat(3, 250px); grid-auto-rows: 52px; gap: 4px; padding: 1px 0 0 9px; }
.tile { display: flex; gap: 5px; padding: 6px 4px 0 12px; }
.tile > span { padding-top: 2px; }
.tile.drive { gap: 8px; padding: 2px 5px 0 5px; }
.tile.drive > svg { margin-top: 12px; }
.tile.drive > .cd { margin: 4px 3px 0 7px; }
.tile .info { flex: 1; padding-top: 0; display: flex; flex-direction: column; line-height: 15px; }
.info small { color: #6d6d6d; font-size: 11px; line-height: 17px; }
.meter { height: 12px; margin: 2px 0; border: 1px solid #bcbcbc; background: #e6e6e6; }
.meter i { display: block; height: 100%; background: #26a0da; }

.status {
  display: flex;
  align-items: center;
  gap: 8px;
  height: 24px;
  padding: 1px 8px 0 14px;
  font-size: 11px;
  color: #1e395b;
}
.status span { padding-right: 12px; }
.status .views { margin-left: auto; }

/* Properties dialog */
.dialog {
  position: absolute;
  left: 925px;
  top: 591px;
  width: 363px;
  border: 1px solid #5c6670;
  background: #f0f0f0;
  font: 11px/13px "Liberation Sans", Arial, sans-serif;
  box-shadow: 0 4px 18px rgba(0, 0, 0, .4);
}
.dialog-title { display: flex; align-items: center; gap: 5px; height: 30px; padding: 0 8px; background: #fff; margin-bottom: 9px; }
.dialog-title h1 { flex: 1; font: 12px/16px "Open Sans", "Noto Sans", sans-serif; }
.dialog-title button { width: 14px; height: 14px; }

.tabrow {
  display: grid;
  grid-template-columns: 78px 76px 114px 75px;
  height: 18px;
  margin-left: 8px;
}
.tabrow.top { grid-template-columns: 118px 151px 74px; }
.tabrow button { border: solid #d9d9d9; border-width: 1px 1px 0 0; }
.tabrow button:first-child { border-left-width: 1px; }
.tabrow .active {
  position: relative;
  height: 21px;
  margin: -2px 0 0 -2px;
  padding-bottom: 2px;
  background: #fff;
}
.panel {
  margin: 0 8px 0 6px;
  padding: 19px 14px 22px;
  background: #fff;
  border: 1px solid #dcdcdc;
}
.name-row { display: flex; align-items: center; gap: 47px; height: 34px; padding-bottom: 11px; }
.name-row + dl { border-top: 1px solid #a0a0a0; }
.field { position: relative; }
.field input { display: block; width: 246px; height: 23px; border: 1px solid #0a64ad; background: #fff; padding: 0 3px; margin-right: -2px; }
.caret { position: absolute; left: 3px; top: 3px; width: 1px; height: 13px; background: #000; }
dl {
  display: grid;
  grid-template-columns: 108px 1fr;
  grid-auto-rows: 21px;
  line-height: 21px;
  padding: 6px 0 3px;
}
dl, table, .chart-row { border-bottom: 1px solid #a0a0a0; }
table { width: 100%; border-collapse: separate; border-spacing: 0; table-layout: fixed; padding: 4px 0 7px; }
.total { border: 0; padding: 5px 0 4px; }
td, th { height: 21px; padding: 0; font-weight: 400; text-align: right; white-space: nowrap; }
td:last-child { padding-right: 33px; }
th { text-align: left; width: 62px; }
.key { width: 21px; }
td:nth-child(3) { width: 138px; }
.swatch { display: block; width: 15px; height: 15px; }
.used { background: #26a0da; }
.free { background: #adadad; }
.chart-row { display: grid; grid-template-columns: 1fr auto 1fr; height: 90px; margin-bottom: 32px; }
figure { grid-column: 2; display: flex; flex-direction: column; align-items: center; gap: 15px; }
.btn { height: 21px; border: 1px solid #adadad; background: #e1e1e1; }
.chart-row .btn { justify-self: end; align-self: end; width: 88px; margin: 0 -1px 6px 0; }
.check { display: flex; align-items: flex-start; gap: 3px; margin-bottom: 10px; }
.check input {
  appearance: none;
  flex: none;
  display: grid;
  place-items: center;
  width: 13px;
  height: 13px;
  border: 1px solid #333;
  background: #fff;
}
.check input:checked::before {
  content: "";
  width: 9px;
  height: 4px;
  border: solid #222;
  border-width: 0 0 1px 1px;
  transform: translateY(-1px) rotate(-45deg);
}
.check:last-child { margin: 0; }
.actions { display: flex; justify-content: flex-end; gap: 8px; padding: 8px 7px 7px; }
.actions .btn { width: 73px; }
.btn.default { border: 2px solid #0078d7; }
.btn:disabled { background: #ccc; border-color: #bfbfbf; color: #838383; }

/* Taskbar */
.taskbar {
  position: relative;
  display: flex;
  height: 40px;
  background: linear-gradient(90deg, #02181f, #03131f 50%, #020a1a);
  color: #fff;
}
.taskbar > button { width: 49px; }
.taskbar > .start { width: 48px; }
.taskbar > .task-view { width: 51px; padding-right: 3px; }
.task-search {
  display: flex;
  align-items: center;
  width: 344px;
  padding: 0 4px 0 12px;
  background: #f2f2f2;
  border-bottom: 1px solid #b8b8b8;
}
.task-search input { flex: 1; min-width: 0; margin-left: 10px; outline: 0; font-size: 14px; }
.task-search input::placeholder { color: #444; opacity: 1; }
.castle { align-self: flex-end; }
.taskbar > .running { background: #33454e; border-bottom: 2px solid #76b9ed; }
.tray { display: flex; margin-left: auto; padding-right: 4px; }
.tray button { width: 24px; }
.tray .lang { width: 42px; padding-right: 4px; }
.tray .clock { width: 56px; flex-direction: column; font-size: 11px; line-height: 18px; }
.tray .notify { width: 54px; padding-right: 4px; border-right: 1px solid #4a525c; }
```
